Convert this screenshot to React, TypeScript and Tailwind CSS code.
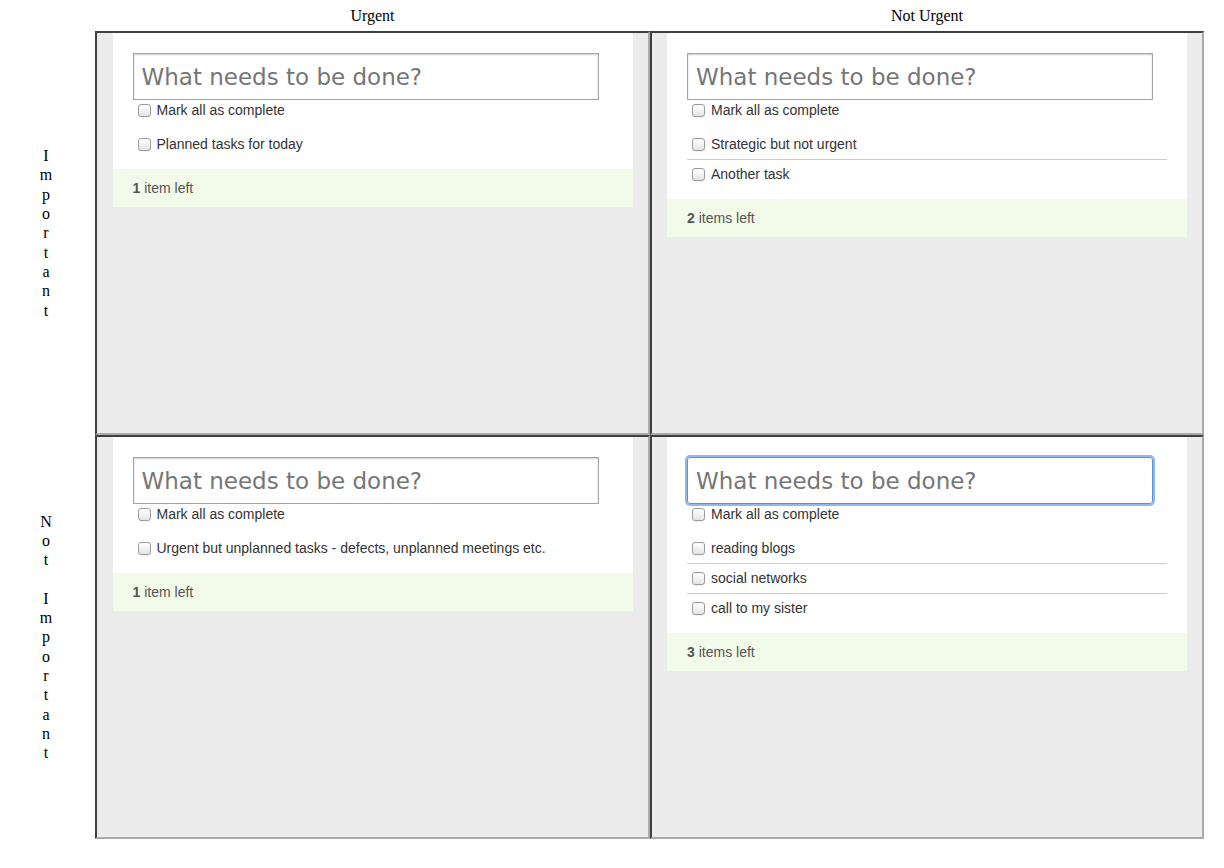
const quadrants = [
  { items: ["Planned tasks for today"], focused: false },
  { items: ["Strategic but not urgent", "Another task"], focused: false },
  { items: ["Urgent but unplanned tasks - defects, unplanned meetings etc."], focused: false },
  { items: ["reading blogs", "social networks", "call to my sister"], focused: true },
];

function Checkbox() {
  return (
    <span className="block w-[13px] h-[13px] shrink-0 rounded-[3px] border border-[#9c9c9c] bg-linear-to-b from-white to-[#e4e4e4] shadow-[0_1px_0_rgba(0,0,0,0.05)]" />
  );
}

function Label({ lines }: { lines: string[] }) {
  return (
    <div className="flex flex-col items-center justify-center pr-[3px] text-[16px] leading-[19.3px] text-black">
      {lines.map((l, i) => (
        <span key={i} className="h-[19.3px]">
          {l}
        </span>
      ))}
    </div>
  );
}

function TodoPanel({ items, focused }: { items: string[]; focused: boolean }) {
  const left = items.length;
  return (
    <div className="h-full border-2 border-t-[#3f3f3f] border-l-[#3f3f3f] border-b-[#ababab] border-r-[#ababab] bg-[#ececec]">
      <div className="w-[520px] mx-auto bg-white font-['Liberation_Sans',Arial,sans-serif] text-[14px] text-[#333]">
        <div className="pt-5 px-5">
          <input
            type="text"
            placeholder="What needs to be done?"
            className={`block w-[466px] h-[47px] px-[8px] text-[23px] font-['DejaVu_Sans',sans-serif] text-[#333] placeholder:text-[#767676] outline-none ${
              focused
                ? "rounded-[3px] border border-[#5b93d3] shadow-[0_0_0_2px_rgba(110,160,225,0.75)]"
                : "border border-[#a4a4a4] shadow-[inset_0_1px_2px_rgba(0,0,0,0.2)]"
            }`}
          />
          <div className="h-5 flex items-center gap-[6px] pl-[5px]">
            <Checkbox />
            <span>Mark all as complete</span>
          </div>
          <ul className="mt-[9px]">
            {items.map((t, i) => (
              <li
                key={t}
                className={`h-[30px] flex items-center gap-[6px] pl-[5px] ${i > 0 ? "border-t border-[#cccccc]" : ""}`}
              >
                <Checkbox />
                <span>{t}</span>
              </li>
            ))}
          </ul>
        </div>
        <div className="mt-[10px] h-[38px] flex items-center px-5 bg-[#f2faea] text-[#555]">
          <span className="font-bold">{left}</span>
          <span>&nbsp;{left === 1 ? "item" : "items"} left</span>
        </div>
      </div>
    </div>
  );
}

export default function App() {
  return (
    <div className="w-[1224px] h-[868px] bg-white font-['Liberation_Serif','Times_New_Roman',serif] text-black">
      <div className="grid grid-cols-[95px_555px_554px] grid-rows-[31px_404px_404px]">
        <div />
        <div className="flex items-center justify-center text-[16px]">Urgent</div>
        <div className="flex items-center justify-center text-[16px]">Not Urgent</div>

        <Label lines={["I", "m", "p", "o", "r", "t", "a", "n", "t"]} />
        <TodoPanel {...quadrants[0]} />
        <TodoPanel {...quadrants[1]} />

        <Label lines={["N", "o", "t", "\u00a0", "I", "m", "p", "o", "r", "t", "a", "n", "t"]} />
        <TodoPanel {...quadrants[2]} />
        <TodoPanel {...quadrants[3]} />
      </div>
    </div>
  );
}
